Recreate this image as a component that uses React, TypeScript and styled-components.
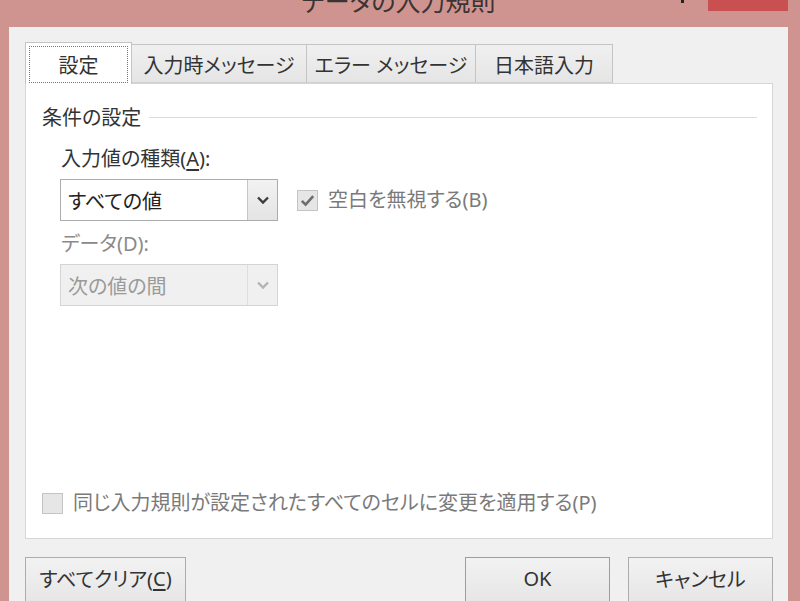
import React from 'react';
import styled, { createGlobalStyle } from 'styled-components';

const GlobalStyle = createGlobalStyle`
  html, body {
    margin: 0;
    padding: 0;
    width: 800px;
    height: 601px;
    overflow: hidden;
    background: #cf948f;
  }
  body {
    font-family: "Noto Sans", "Noto Sans CJK JP", sans-serif;
    font-feature-settings: "palt";
    color: #333333;
  }
`;

const tabs = [
  { label: '設定', width: 107 },
  { label: '入力時メッセージ', width: 175 },
  { label: 'エラー メッセージ', width: 169 },
  { label: '日本語入力', width: 137 },
];

const Chevron: React.FC<{ color: string }> = ({ color }) => (
  <svg width="14" height="10" viewBox="0 0 14 10">
    <path d="M2 2.5 L7 7.5 L12 2.5" fill="none" stroke={color} strokeWidth="2.4" />
  </svg>
);

const CheckMark = () => (
  <svg width="15" height="13" viewBox="0 0 15 13">
    <path d="M1.8 6.8 L5.6 10.6 L13.2 2.2" fill="none" stroke="#6e6e6e" strokeWidth="2.6" />
  </svg>
);

const App: React.FC = () => {
  return (
    <Window>
      <GlobalStyle />
      <TitleBar>
        <span />
        <Title>データの入力規則</Title>
        <Controls>
          <MinDot />
          <CloseButton />
        </Controls>
      </TitleBar>
      <Client>
        <TabRow>
          {tabs.map((t, i) => (
            <Tab key={t.label} $width={t.width} $active={i === 0}>
              {i === 0 ? <FocusRect>{t.label}</FocusRect> : t.label}
            </Tab>
          ))}
        </TabRow>
        <Panel>
          <GroupHeader>
            <span>条件の設定</span>
            <GroupLine />
          </GroupHeader>
          <GroupBody>
            <FieldLabel>
              入力値の種類(<u>A</u>):
            </FieldLabel>
            <SelectRow>
              <Select>
                <SelectValue>すべての値</SelectValue>
                <DropButton>
                  <Chevron color="#3c3c3c" />
                </DropButton>
              </Select>
              <CheckRow>
                <CheckBox $checked>
                  <CheckMark />
                </CheckBox>
                <CheckLabel>空白を無視する(B)</CheckLabel>
              </CheckRow>
            </SelectRow>
            <FieldLabel $disabled style={{ marginTop: 10 }}>
              データ(D):
            </FieldLabel>
            <Select $disabled>
              <SelectValue $disabled>次の値の間</SelectValue>
              <DropButton $disabled>
                <Chevron color="#b4b4b4" />
              </DropButton>
            </Select>
          </GroupBody>
          <Spacer />
          <CheckRow>
            <CheckBox />
            <CheckLabel>同じ入力規則が設定されたすべてのセルに変更を適用する(P)</CheckLabel>
          </CheckRow>
        </Panel>
        <ButtonRow>
          <Button $width={161}>
            すべてクリア(<u>C</u>)
          </Button>
          <Spacer />
          <Button $width={145} $default>
            OK
          </Button>
          <Button $width={145}>キャンセル</Button>
        </ButtonRow>
      </Client>
    </Window>
  );
};

const Window = styled.div`
  width: 800px;
  height: 601px;
  display: flex;
  flex-direction: column;
  overflow: hidden;
`;

const TitleBar = styled.div`
  height: 27px;
  flex-shrink: 0;
  display: grid;
  grid-template-columns: 1fr auto 1fr;
  align-items: start;
  padding: 0 12px 0 9px;
  overflow: hidden;
`;

const Title = styled.div`
  font-size: 25px;
  line-height: 25px;
  margin-top: -12px;
  color: #3b3434;
  font-family: "Noto Sans CJK JP", sans-serif;
`;

const Controls = styled.div`
  display: flex;
  justify-content: flex-end;
  align-items: flex-start;
  gap: 24px;
`;

const MinDot = styled.div`
  width: 3px;
  height: 3px;
  background: #222;
`;

const CloseButton = styled.div`
  width: 80px;
  height: 11px;
  background: #c85050;
`;

const Client = styled.div`
  flex: 1;
  margin: 0 12px 0 9px;
  background: #f0f0f0;
  padding: 15px 0 0 16px;
  display: flex;
  flex-direction: column;
  width: 779px;
  box-sizing: border-box;
`;

const TabRow = styled.div`
  display: flex;
  align-items: flex-end;
  height: 41px;
  position: relative;
  z-index: 1;
`;

const Tab = styled.div<{ $width: number; $active?: boolean }>`
  box-sizing: border-box;
  width: ${(p) => p.$width}px;
  height: ${(p) => (p.$active ? 42 : 39)}px;
  margin-bottom: ${(p) => (p.$active ? -1 : 0)}px;
  border: 1px solid #c4c4c4;
  border-bottom: ${(p) => (p.$active ? 'none' : '1px solid #d0d0d0')};
  border-left: ${(p) => (p.$active ? '1px solid #c4c4c4' : 'none')};
  background: ${(p) => (p.$active ? '#ffffff' : 'linear-gradient(#f0f0f0, #e5e5e5)')};
  display: flex;
  align-items: center;
  justify-content: center;
  font-size: 20px;
  color: #333;
  padding: ${(p) => (p.$active ? '3px 3px 1px' : '2px 0 0')};
`;

const FocusRect = styled.div`
  flex: 1;
  align-self: stretch;
  display: flex;
  align-items: center;
  justify-content: center;
  border: 1px dotted #777;
`;

const Panel = styled.div`
  box-sizing: border-box;
  width: 748px;
  height: 456px;
  background: #ffffff;
  border: 1px solid #d6d6d6;
  display: flex;
  flex-direction: column;
  padding: 21px 15px 22px 16px;
`;

const GroupHeader = styled.div`
  display: flex;
  align-items: center;
  gap: 8px;
  font-size: 20px;
  line-height: 26px;
  color: #333;
`;

const GroupLine = styled.div`
  flex: 1;
  height: 1px;
  background: #dcdcdc;
  margin-top: -1px;
`;

const GroupBody = styled.div`
  display: flex;
  flex-direction: column;
  padding: 15px 0 0 19px;
`;

const FieldLabel = styled.div<{ $disabled?: boolean }>`
  font-size: 20px;
  line-height: 26px;
  color: ${(p) => (p.$disabled ? '#8a8a8a' : '#333')};
  margin-bottom: 7px;
  u {
    text-underline-offset: 3px;
  }
`;

const SelectRow = styled.div`
  display: flex;
  align-items: center;
  gap: 19px;
`;

const Select = styled.div<{ $disabled?: boolean }>`
  box-sizing: border-box;
  width: 218px;
  height: 42px;
  margin-left: -1px;
  display: flex;
  border: 1px solid ${(p) => (p.$disabled ? '#d4d4d4' : '#acacac')};
  background: ${(p) => (p.$disabled ? '#f0f0f0' : '#ffffff')};
`;

const SelectValue = styled.div<{ $disabled?: boolean }>`
  flex: 1;
  display: flex;
  align-items: center;
  padding-left: 7px;
  font-size: 20px;
  color: ${(p) => (p.$disabled ? '#9a9a9a' : '#222')};
`;

const DropButton = styled.div<{ $disabled?: boolean }>`
  width: 29px;
  display: flex;
  align-items: center;
  justify-content: center;
  border-left: 1px solid ${(p) => (p.$disabled ? '#dedede' : '#c6c6c6')};
  background: ${(p) => (p.$disabled ? '#f0f0f0' : 'linear-gradient(#f2f2f2, #e4e4e4)')};
`;

const CheckRow = styled.div`
  display: flex;
  align-items: center;
  gap: 10px;
`;

const CheckBox = styled.div<{ $checked?: boolean }>`
  box-sizing: border-box;
  width: 21px;
  height: 21px;
  border: 1px solid #c4c4c4;
  background: #e6e6e6;
  display: flex;
  align-items: center;
  justify-content: center;
`;

const CheckLabel = styled.div`
  font-size: 20px;
  line-height: 26px;
  color: #7a7a7a;
`;

const Spacer = styled.div`
  flex: 1;
`;

const ButtonRow = styled.div`
  display: flex;
  gap: 18px;
  margin-top: 18px;
  width: 748px;
`;

const Button = styled.div<{ $width: number; $default?: boolean }>`
  box-sizing: border-box;
  width: ${(p) => p.$width}px;
  height: 46px;
  border: 1px solid ${(p) => (p.$default ? '#6fa7e0' : '#acacac')};
  background: linear-gradient(#f2f2f2, #e6e6e6);
  display: flex;
  align-items: center;
  justify-content: center;
  font-size: 20px;
  color: #333;
  padding-bottom: 4px;
  u {
    text-underline-offset: 3px;
  }
`;

export default App;
